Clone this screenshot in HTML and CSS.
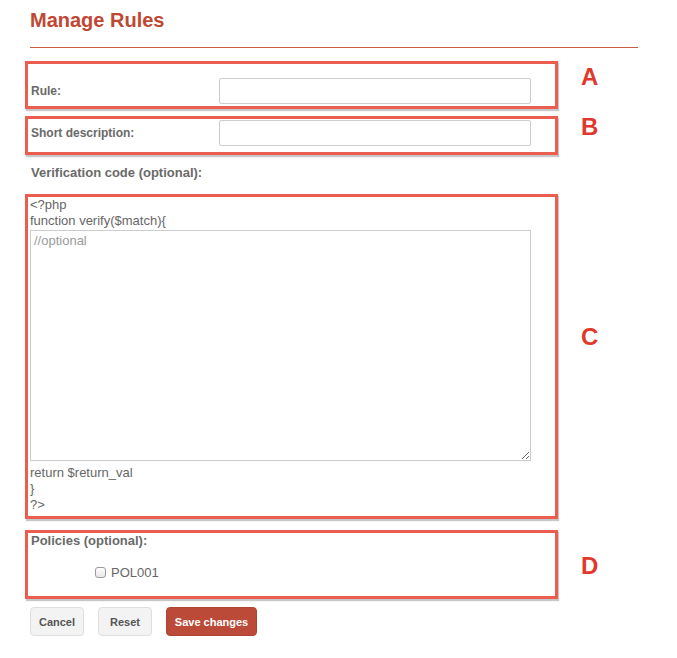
FILE: index.html
```html
<!DOCTYPE html>
<html>
<head>
<meta charset="utf-8">
<title>Manage Rules</title>
<link rel="stylesheet" href="styles.css">
</head>
<body>
<div class="page">
  <h1 class="title">Manage Rules</h1>
  <div class="divider"></div>
  <form class="form">
    <div class="row">
      <div class="box box-a">
        <label class="label label-col">Rule:</label>
        <input class="input" type="text">
      </div>
      <span class="tag tag-a">A</span>
    </div>
    <div class="row row-b">
      <div class="box box-b">
        <label class="label label-col">Short description:</label>
        <input class="input" type="text">
      </div>
      <span class="tag tag-b">B</span>
    </div>
    <div class="label label-lg section-label">Verification code (optional):</div>
    <div class="row row-c">
      <div class="box box-c">
        <div class="code">&lt;?php</div>
        <div class="code">function verify($match){</div>
        <textarea class="code-area" placeholder="//optional"></textarea>
        <div class="code">return $return_val</div>
        <div class="code">}</div>
        <div class="code">?&gt;</div>
      </div>
      <span class="tag tag-c">C</span>
    </div>
    <div class="row row-d">
      <div class="box box-d">
        <div class="label label-lg">Policies (optional):</div>
        <label class="policy"><input class="check" type="checkbox"><span>POL001</span></label>
      </div>
      <span class="tag tag-d">D</span>
    </div>
    <div class="actions">
      <button type="button" class="btn btn-cancel">Cancel</button>
      <button type="button" class="btn btn-reset">Reset</button>
      <button type="button" class="btn btn-save">Save changes</button>
    </div>
  </form>
</div>
</body>
</html>
```
FILE: styles.css
```css
html, body {
  margin: 0;
  padding: 0;
  background: #ffffff;
}
body {
  font-family: "Liberation Sans", Arial, sans-serif;
  color: #666;
}
.page {
  padding: 0 0 0 25px;
}
.title {
  margin: 9px 0 0 5px;
  font-size: 20px;
  line-height: 23px;
  font-weight: bold;
  color: #bf4733;
}
.divider {
  margin: 15px 0 0 5px;
  width: 608px;
  height: 1px;
  background: #cc5a44;
}
.form {
  margin: 13px 0 0 0;
}
.row {
  display: flex;
  align-items: flex-start;
}
.row-b { margin-top: 7px; }
.row-c { margin-top: 14px; }
.row-d { margin-top: 11px; }
.box {
  box-sizing: border-box;
  width: 533px;
  border: 3px solid #eb5d4e;
  box-shadow: 1px 2px 1px rgba(0, 0, 0, 0.22);
}
.box-a {
  display: flex;
  align-items: center;
  padding: 14px 3px 2px 3px;
}
.box-b {
  display: flex;
  align-items: center;
  padding: 1px 3px 6px 3px;
}
.box-c {
  padding: 0 3px 3px 2px;
}
.box-d {
  padding: 0 3px 16px 3px;
}
.label {
  font-size: 12px;
  line-height: 15px;
  font-weight: bold;
  color: #6a6a6a;
}
.label-lg {
  font-size: 13px;
}
.label-col {
  width: 188px;
  flex: none;
}
.input {
  box-sizing: border-box;
  width: 312px;
  height: 26px;
  margin: 0;
  border: 1px solid #cccccc;
  border-radius: 2px;
  background: #fff;
  font-family: inherit;
  font-size: 13px;
  padding: 3px 6px;
}
.section-label {
  margin: 10px 0 0 6px;
}
.code {
  font-size: 13px;
  line-height: 16px;
  color: #666;
}
.code-area {
  display: block;
  box-sizing: border-box;
  width: 501px;
  height: 231px;
  margin: 1px 0 4px 0;
  border: 1px solid #cccccc;
  border-radius: 0;
  padding: 2px 3px;
  font-family: "Liberation Sans", Arial, sans-serif;
  font-size: 13px;
  line-height: 16px;
  color: #555;
  resize: both;
}
.code-area::placeholder {
  color: #9a9a9a;
}
.policy {
  display: flex;
  align-items: center;
  margin: 17px 0 0 64px;
  height: 15px;
  font-size: 13px;
  color: #666;
}
.check {
  appearance: none;
  -webkit-appearance: none;
  box-sizing: border-box;
  width: 11px;
  height: 11px;
  margin: 0 5px 0 0;
  border: 1px solid #9a9a9a;
  border-radius: 3px;
  background: linear-gradient(#ffffff, #e6e6e6);
}
.tag {
  margin-left: 23px;
  font-size: 24px;
  line-height: 24px;
  font-weight: bold;
  color: #e2382c;
}
.tag-a { margin-top: 4px; }
.tag-b { margin-top: -1px; }
.tag-c { margin-top: 131px; }
.tag-d { margin-top: 24px; }
.actions {
  display: flex;
  gap: 14px;
  margin: 8px 0 0 5px;
}
.btn {
  box-sizing: border-box;
  height: 29px;
  padding: 0;
  border: 1px solid #dedede;
  border-radius: 4px;
  background: #f3f3f3;
  font-family: "Liberation Sans", Arial, sans-serif;
  font-size: 11px;
  font-weight: bold;
  color: #555;
  text-align: center;
}
.btn-cancel { width: 54px; }
.btn-reset { width: 54px; }
.btn-save {
  width: 91px;
  background: #bc4a38;
  border-color: #b04434;
  color: #ffffff;
}
```
